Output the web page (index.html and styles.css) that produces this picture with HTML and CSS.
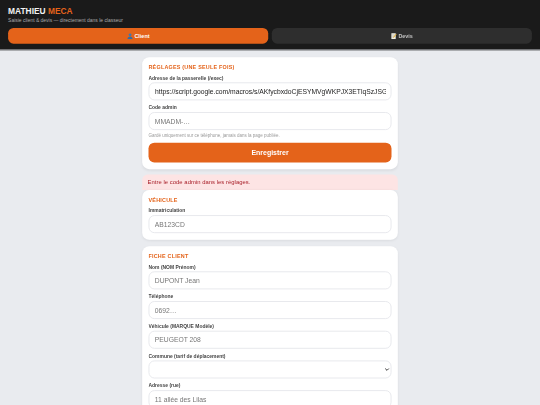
FILE: index.html
```html
<!DOCTYPE html>
<html lang="fr">
<head>
<meta charset="utf-8">
<title>Mathieu Meca</title>
<link rel="stylesheet" href="styles.css">
</head>
<body>
<div class="frame">
<div class="page">
<header class="top">
  <h1 class="brand">MATHIEU <span class="accent">MECA</span></h1>
  <p class="sub">Saisie client &amp; devis — directement dans le classeur</p>
  <nav class="tabs">
    <button class="tab on">
      <svg class="ico" viewBox="0 0 16 16"><circle cx="8" cy="5" r="3.6" fill="#3b78b5"/><path d="M1.5 16c0-5 3-7 6.500-7s6.500 2 6.500 7z" fill="#2f6da8"/></svg>
      Client</button>
    <button class="tab">
      <svg class="ico" viewBox="0 0 16 16"><rect x="2" y="1" width="11" height="15" fill="#f4f1e4"/><path d="M4 5h7M4 8h7M4 11h5" stroke="#9a9a9a"/><path d="M7 10l7-8 1.500 1.500-7 8-2 .8z" fill="#e8b030"/></svg>
      Devis</button>
  </nav>
</header>
<main class="wrap">
  <section class="card">
    <h2>RÉGLAGES (UNE SEULE FOIS)</h2>
    <label>Adresse de la passerelle (/exec)</label>
    <input class="in" value="https://script.google.com/macros/s/AKfycbxdoCjESYMVgWKPJX3ETlqSzJSG">
    <label>Code admin</label>
    <input class="in" placeholder="MMADM-…">
    <p class="hint">Gardé uniquement sur ce téléphone, jamais dans la page publiée.</p>
    <button class="save">Enregistrer</button>
  </section>
  <div class="err">Entre le code admin dans les réglages.</div>
  <section class="card">
    <h2>VÉHICULE</h2>
    <label>Immatriculation</label>
    <input class="in" placeholder="AB123CD">
  </section>
  <section class="card">
    <h2>FICHE CLIENT</h2>
    <label>Nom (NOM Prénom)</label>
    <input class="in" placeholder="DUPONT Jean">
    <label>Téléphone</label>
    <input class="in" placeholder="0692…">
    <label>Véhicule (MARQUE Modèle)</label>
    <input class="in" placeholder="PEUGEOT 208">
    <label>Commune (tarif de déplacement)</label>
    <select class="in"><option></option></select>
    <label>Adresse (rue)</label>
    <input class="in" placeholder="11 allée des Lilas">
  </section>
</main>
</div>
</div>
</body>
</html>
```
FILE: styles.css
```css
* { box-sizing: border-box; }
html, body { margin: 0; height: 405px; overflow: hidden; }
body { background: #e9ebef; font-family: "Liberation Sans", Arial, sans-serif; color: #222; }
.frame { width: 540px; height: 405px; overflow: hidden; }
.page { width: 1200px; height: 900px; overflow: hidden; transform: scale(.45); transform-origin: 0 0; }
.top { background: #1a1a1a; height: 112px; padding: 11px 18px 0; border-bottom: 2px solid #c8cad0; }
.brand { margin: 0; font-size: 18.600px; line-height: 27px; font-weight: 700; color: #f2f2f2; }
.accent { color: #e4631a; }
.sub { margin: 0; font-size: 11px; line-height: 13px; color: #aaa; }
.tabs { display: flex; gap: 8px; margin-top: 11px; }
.tab { flex: 1; height: 35px; border: 0; border-radius: 12px; background: #2e2e2e; color: #c4c4c4; font: 700 12px "Liberation Sans", Arial, sans-serif; display: flex; align-items: center; justify-content: center; gap: 3px; padding: 0; }
.tab.on { background: #e4631a; color: #fff; }
.ico { width: 14px; height: 14px; }
.wrap { width: 568px; margin: 15px auto 0; }
.card { background: #fff; border-radius: 16px; padding: 14px 14px 15px; margin-bottom: 14px; box-shadow: 0 2px 6px rgba(0,0,0,.06); }
.card:first-child { margin-bottom: 12px; }
h2 { margin: 0; font-size: 12px; line-height: 16px; letter-spacing: .5px; color: #e4631a; font-weight: 700; }
label { display: block; font-size: 11px; line-height: 13px; font-weight: 700; color: #444; margin: 10px 0 3px; }
.in { display: block; width: 100%; height: 40px; border: 2px solid #e5e7eb; border-radius: 13px; background: #fff; padding: 0 12px; font: 15px "Liberation Sans", Arial, sans-serif; color: #222; }
.in::placeholder { color: #777; }
.hint { margin: 6px 0 10px; font-size: 10px; line-height: 12px; color: #999; }
.save { display: block; width: 100%; height: 44px; border: 0; border-radius: 13px; background: #e4631a; color: #fff; font: 700 15.500px "Liberation Sans", Arial, sans-serif; }
.err { background: #fde4e4; color: #a8202a; font-size: 13px; letter-spacing: .1px; line-height: 34px; height: 34px; padding: 0 12px; border-radius: 12px 12px 0 0; }
```
